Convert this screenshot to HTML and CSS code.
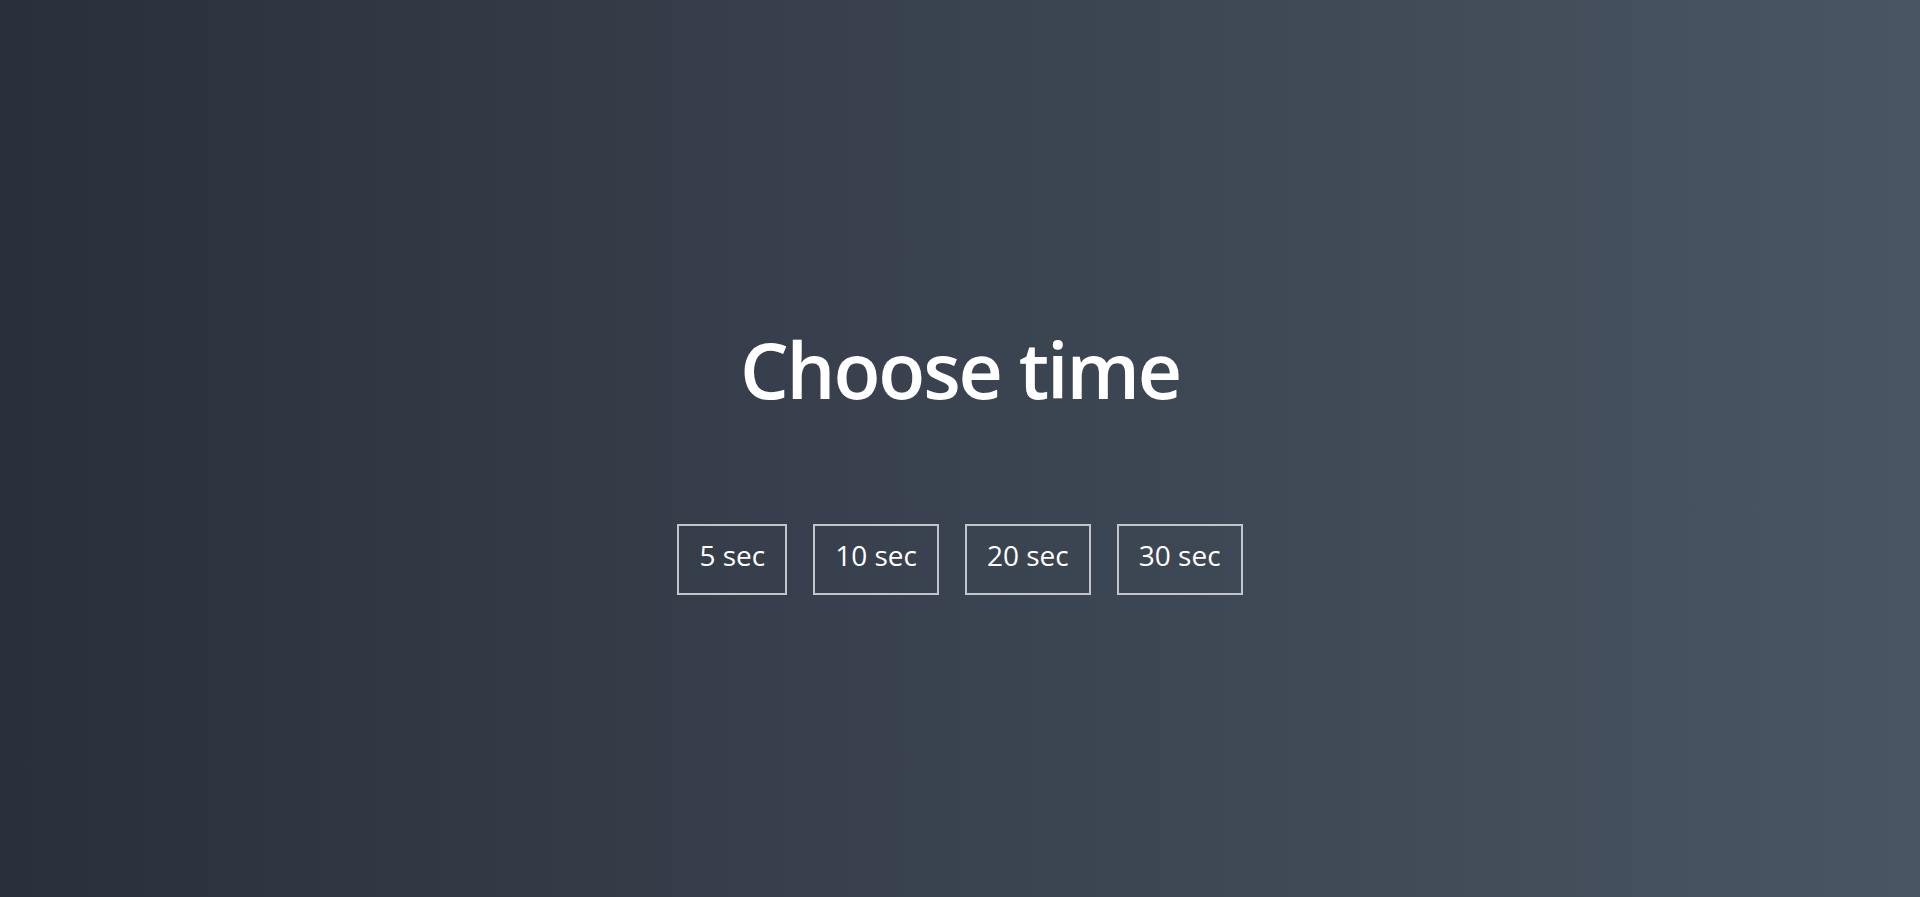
FILE: index.html
```html
<!DOCTYPE html>
<html lang="en">
<head>
<meta charset="UTF-8">
<title>Choose time</title>
<link rel="stylesheet" href="styles.css">
</head>
<body>
<main class="screen">
  <h1 class="title">Choose time</h1>
  <ul class="time-list">
    <li><button class="time-btn">5 sec</button></li>
    <li><button class="time-btn">10 sec</button></li>
    <li><button class="time-btn">20 sec</button></li>
    <li><button class="time-btn">30 sec</button></li>
  </ul>
</main>
</body>
</html>
```
FILE: styles.css
```css
* { box-sizing: border-box; }
html, body { height: 100%; }
body {
  margin: 0;
  font-family: "Open Sans", "Liberation Sans", sans-serif;
  color: #fff;
  background: linear-gradient(90deg, #29303b 0%, #4a5563 100%);
  overflow: hidden;
}
.screen {
  height: 100vh;
  display: flex;
  flex-direction: column;
  align-items: center;
  justify-content: center;
  padding-top: 16px;
}
.title {
  margin: 0 0 101px;
  font-size: 77px;
  font-weight: 640;
  line-height: 1.362;
  letter-spacing: -2.1px;
}
.time-list {
  list-style: none;
  margin: 0;
  padding: 0;
  display: flex;
  gap: 26px;
}
.time-btn {
  font-family: inherit;
  font-size: 28px;
  line-height: 38px;
  color: #fff;
  background: transparent;
  border: 2px solid #c2c6cb;
  padding: 10px 20px 19px;
  cursor: pointer;
}
```
